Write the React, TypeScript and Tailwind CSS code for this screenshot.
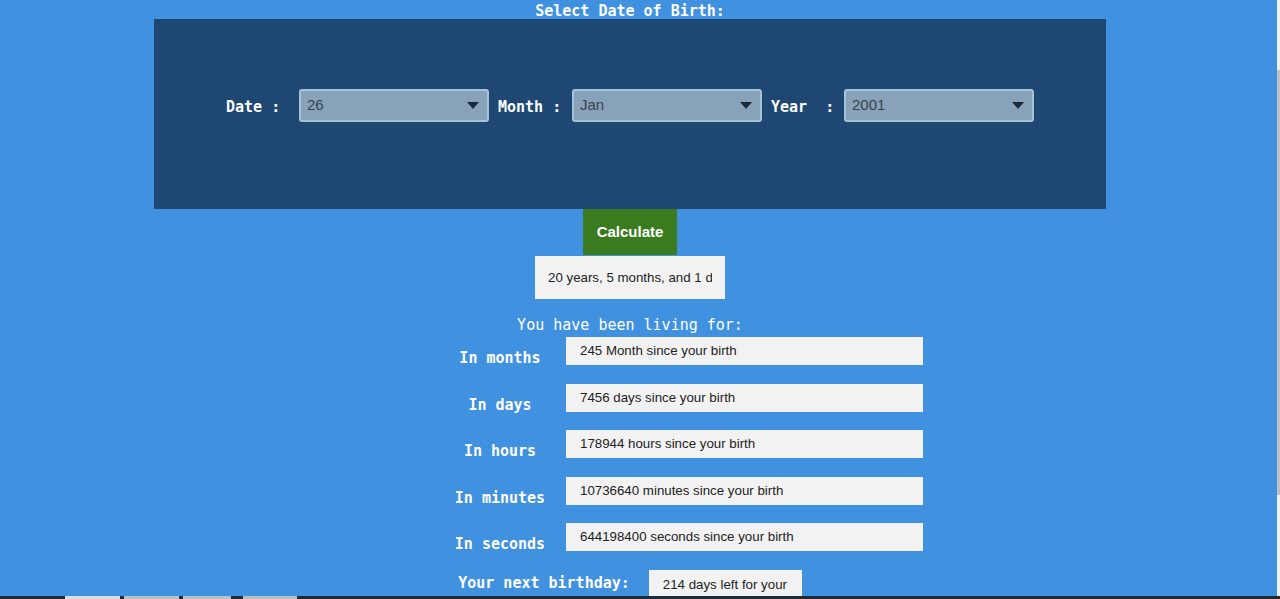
import React from 'react';

const mono = { fontFamily: '"DejaVu Sans Mono", monospace' };

const Caret = () => (
  <svg width="12" height="7" viewBox="0 0 12 7" className="flex-shrink-0">
    <path d="M0 0h12L6 7z" fill="#1f2a36" />
  </svg>
);

function Select({ value }: { value: string }) {
  return (
    <div className="w-[190px] h-[33px] flex items-center justify-between pl-[6px] pr-[8px] bg-[#88a3b9] border-2 border-[#a6c1da] rounded-[3px] font-['Liberation_Sans',Arial,sans-serif] font-normal text-[15px] text-[#36424f]">
      <span>{value}</span>
      <Caret />
    </div>
  );
}

const stats = [
  { label: 'In months', value: '245 Month since your birth' },
  { label: 'In days', value: '7456 days since your birth' },
  { label: 'In hours', value: '178944 hours since your birth' },
  { label: 'In minutes', value: '10736640 minutes since your birth' },
  { label: 'In seconds', value: '644198400 seconds since your birth' },
];

export default function App() {
  return (
    <div className="w-[1280px] h-[599px] overflow-hidden flex flex-col bg-[#4191e1]">
      <div className="flex flex-1 min-h-0">
        <div className="w-[1260px] flex flex-col items-center">
          <h1 style={mono} className="shrink-0 h-[19px] pt-[3px] leading-[16px] text-[15px] font-bold text-white">
            Select Date of Birth:
          </h1>

          {/* date picker panel */}
          <div style={mono} className="shrink-0 w-[952px] bg-[#1e4873] pt-[70px] pb-[87px] flex justify-center text-white text-[15px] font-bold">
            <div className="flex items-center">
              <span className="w-[73px] pt-[4px]">Date :</span>
              <Select value="26" />
              <span className="w-[74px] ml-[9px] pt-[4px]">Month :</span>
              <Select value="Jan" />
              <span className="w-[73px] ml-[9px] pt-[4px] whitespace-pre">Year  :</span>
              <Select value="2001" />
            </div>
          </div>

          <button className="shrink-0 w-[94px] h-[46px] bg-[#3a7b1f] text-white font-bold text-[15px] font-['Liberation_Sans',Arial,sans-serif]">
            Calculate
          </button>
          <div className="shrink-0 mt-px w-[190px] h-[43px] bg-[#f2f2f2] px-[13px] flex items-center text-[13.3px] text-[#222] font-['Liberation_Sans',Arial,sans-serif]">
            <span className="overflow-hidden whitespace-nowrap">20 years, 5 months, and 1 day</span>
          </div>

          <p style={mono} className="shrink-0 mt-[17px] h-[19px] leading-[19px] text-[15px] text-white">
            You have been living for:
          </p>

          <div className="shrink-0 mt-[2px] flex justify-center w-full">
            <div className="ml-[113px] w-[473px] flex flex-col gap-[18.5px]">
              {stats.map((s) => (
                <div key={s.label} className="h-[28px] flex items-start gap-[16px]">
                  <span style={mono} className="w-[100px] pt-[12px] text-center text-[15px] leading-[18px] font-bold text-white">
                    {s.label}
                  </span>
                  <div className="w-[357px] h-[28px] bg-[#f2f2f2] pl-[14px] flex items-center text-[13.3px] text-[#222] font-['Liberation_Sans',Arial,sans-serif]">
                    {s.value}
                  </div>
                </div>
              ))}
            </div>
          </div>

          <div className="shrink-0 mt-[19px] flex items-start gap-[19px]">
            <span style={mono} className="pt-[4px] text-[15px] leading-[18px] font-bold text-white">
              Your next birthday:
            </span>
            <div className="w-[153px] h-[30px] bg-[#f2f2f2] px-[14px] flex items-center text-[13.3px] text-[#222] font-['Liberation_Sans',Arial,sans-serif]">
              <span className="overflow-hidden whitespace-nowrap">214 days left for your birthday</span>
            </div>
          </div>
        </div>
        <div className="flex-1" />
        {/* scrollbar */}
        <div className="w-[3px] bg-[#f0f0f0] flex flex-col">
          <div className="h-[70px]" />
          <div className="h-[425px] bg-[#c1c1c1]" />
        </div>
      </div>
      {/* taskbar edge */}
      <div className="h-[3px] bg-[#1d2a38] flex gap-[4px] pl-[65px]">
        <div className="w-[55px] bg-[#d8dde2]" />
        <div className="w-[55px] bg-[#b8c0c8]" />
        <div className="w-[48px] bg-[#b8c0c8]" />
        <div className="w-[54px] bg-[#b8c0c8] ml-[8px]" />
      </div>
    </div>
  );
}
